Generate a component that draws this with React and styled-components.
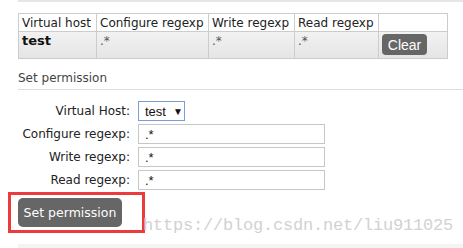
import React from "react";
import styled, { createGlobalStyle } from "styled-components";

const GlobalStyle = createGlobalStyle`
  body {
    margin: 0;
    background: #fff;
    font-family: "DejaVu Sans", Verdana, sans-serif;
    font-size: 12px;
    color: #222;
  }
`;

const Page = styled.div`
  position: relative;
  width: 463px;
  height: 248px;
  overflow: hidden;
  padding-left: 18px;
  box-sizing: border-box;
`;

const TopRule = styled.div`
  height: 2px;
  background: #e6e6e6;
`;

const Table = styled.table`
  margin-top: 11px;
  border-collapse: collapse;
  width: 429px;
  table-layout: fixed;
`;

const Th = styled.th`
  width: ${(p) => p.w - 7}px;
  height: 17px;
  padding: 0 3px;
  border: 1px solid #cccccc;
  background: #fff;
  font-weight: normal;
  text-align: left;
  line-height: 16px;
  white-space: nowrap;
  overflow: hidden;
`;

const Row = styled.tr`
  background: linear-gradient(#f2f2f2, #e4e4e4);
`;

const Td = styled.td`
  height: 25px;
  padding: 1px 3px 0;
  border: 1px solid #cccccc;
  vertical-align: top;
  font-weight: ${(p) => (p.bold ? "bold" : "normal")};
  font-size: ${(p) => (p.bold ? "13px" : "12px")};
  color: ${(p) => (p.bold ? "#111" : "#555")};
  line-height: 16px;
`;

const SmallButton = styled.button`
  margin-top: 1px;
  width: 45px;
  height: 21px;
  padding: 0;
  border: none;
  border-radius: 4px;
  background: #666;
  color: #fff;
  font-family: "Liberation Sans", Arial, sans-serif;
  font-size: 14px;
`;

const Heading = styled.h3`
  margin: 11px 0 0;
  padding-bottom: 3px;
  border-bottom: 1px solid #dddddd;
  font-size: 12px;
  font-weight: normal;
  line-height: 16px;
  color: #444;
`;

const Form = styled.div`
  margin-top: 11px;
  display: grid;
  grid-template-columns: 112px 187px;
  column-gap: 8px;
  row-gap: 3px;
  align-items: center;
`;

const Label = styled.label`
  text-align: right;
  white-space: nowrap;
  color: #222;
`;

const FakeSelect = styled.div`
  width: 47px;
  height: 20px;
  box-sizing: border-box;
  border: 1px solid #7d9bd6;
  display: flex;
  align-items: center;
  gap: 7px;
  padding-left: 6px;
  font-family: "Liberation Sans", Arial, sans-serif;
  font-size: 13px;
  color: #111;
`;

const Caret = styled.span`
  font-size: 10px;
`;

const Input = styled.input`
  width: 187px;
  height: 20px;
  box-sizing: border-box;
  border: 1px solid #c6c6c6;
  padding: 0 6px;
  margin: 0;
  font-family: "Liberation Sans", Arial, sans-serif;
  font-size: 13px;
  color: #111;
  outline: none;
`;

const ButtonWrap = styled.div`
  position: relative;
  margin-top: 8px;
  width: 104px;
`;

const BigButton = styled.button`
  display: block;
  width: 104px;
  height: 29px;
  padding: 0;
  border: none;
  border-radius: 5px;
  background: #666;
  color: #fff;
  font-family: "DejaVu Sans", Verdana, sans-serif;
  font-size: 12.5px;
`;

const Highlight = styled.div`
  position: absolute;
  left: -10px;
  top: -6px;
  width: 137px;
  height: 41px;
  box-sizing: border-box;
  border: 3px solid #ec3b3b;
  pointer-events: none;
`;

const Watermark = styled.div`
  position: absolute;
  left: 143px;
  top: 216px;
  font-family: "Liberation Mono", "Courier New", monospace;
  font-size: 17px;
  letter-spacing: -0.2px;
  color: #d2d2d2;
  white-space: nowrap;
`;

const BottomBand = styled.div`
  margin-top: 17px;
  height: 6px;
  background: #f4f4f4;
`;

const cols = [
  ["Virtual host", 78],
  ["Configure regexp", 112],
  ["Write regexp", 86],
  ["Read regexp", 84],
  ["", 69],
];

export default function App() {
  return (
    <>
      <GlobalStyle />
      <Page>
        <TopRule />
        <Table>
          <thead>
            <tr>
              {cols.map(([name, w], i) => (
                <Th key={i} w={w}>
                  {name}
                </Th>
              ))}
            </tr>
          </thead>
          <tbody>
            <Row>
              <Td bold>test</Td>
              <Td>.*</Td>
              <Td>.*</Td>
              <Td>.*</Td>
              <Td>
                <SmallButton>Clear</SmallButton>
              </Td>
            </Row>
          </tbody>
        </Table>

        <Heading>Set permission</Heading>

        <Form>
          <Label>Virtual Host:</Label>
          <FakeSelect>
            test <Caret>▼</Caret>
          </FakeSelect>
          <Label>Configure regexp:</Label>
          <Input defaultValue=".*" />
          <Label>Write regexp:</Label>
          <Input defaultValue=".*" />
          <Label>Read regexp:</Label>
          <Input defaultValue=".*" />
        </Form>

        <ButtonWrap>
          <BigButton>Set permission</BigButton>
          <Highlight />
        </ButtonWrap>

        <BottomBand />
        <Watermark>https://blog.csdn.net/liu911025</Watermark>
      </Page>
    </>
  );
}
